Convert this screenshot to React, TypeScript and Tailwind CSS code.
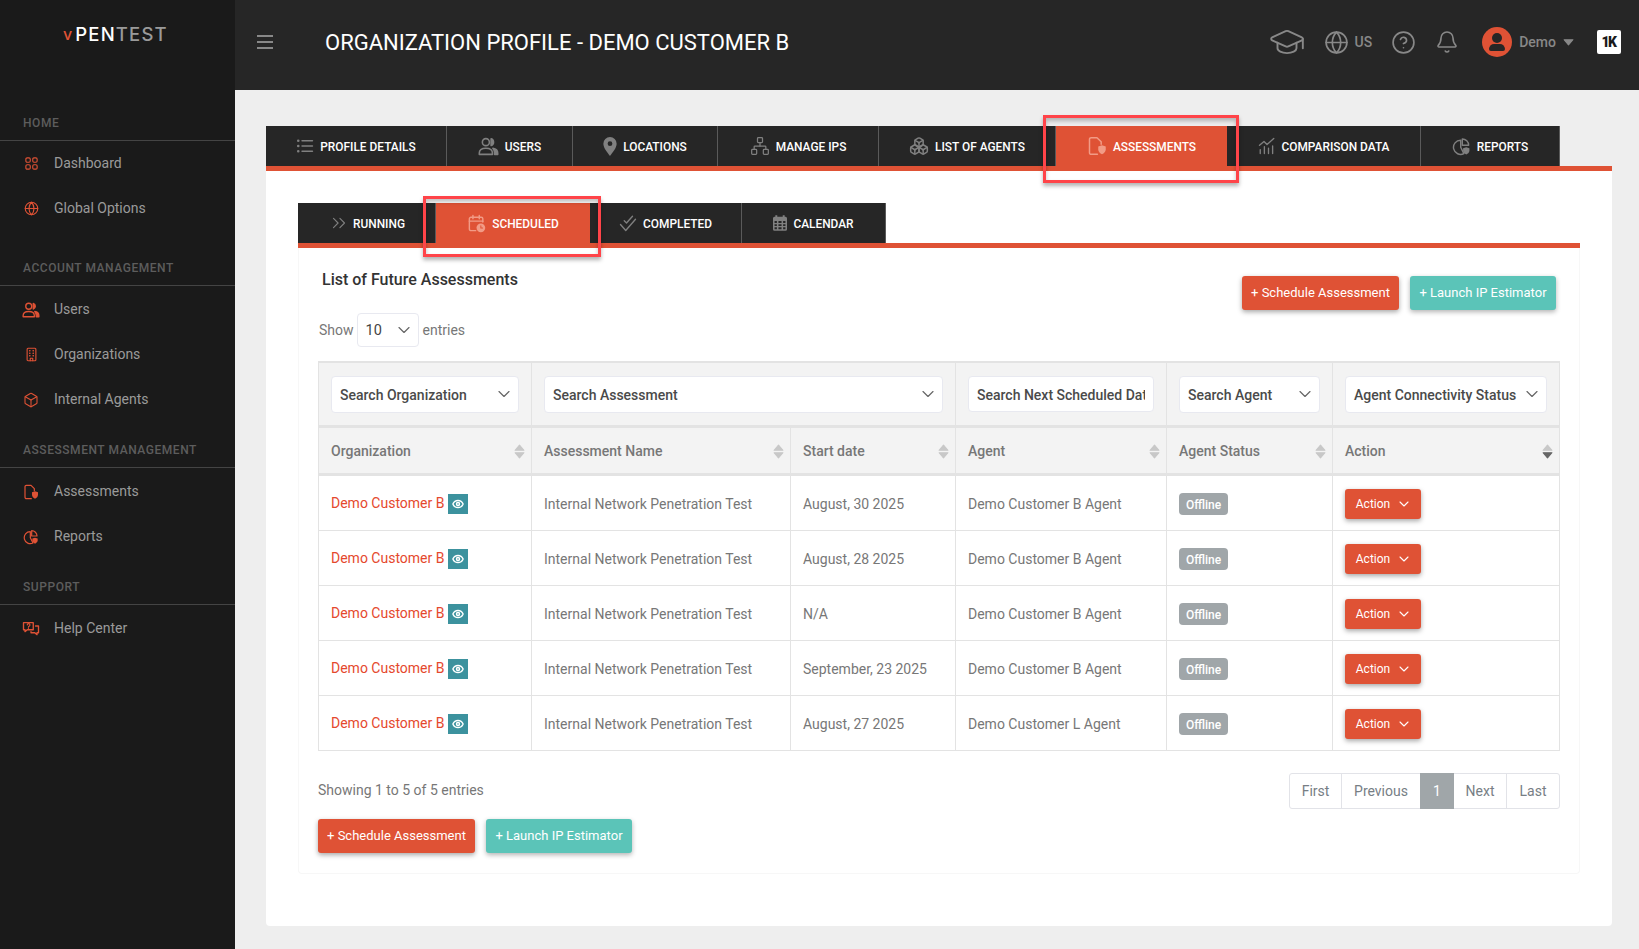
import React from "react";
import { Bell, Box, ChevronDown, ChevronsRight, CircleHelp, Eye, Globe, GraduationCap, Network, Boxes } from "lucide-react";

type IconProps = { className?: string };

const S = ({ className, children }: IconProps & { children: React.ReactNode }) => (
  <svg viewBox="0 0 24 24" fill="none" stroke="currentColor" strokeWidth="1.8" strokeLinecap="round" strokeLinejoin="round" className={className}>
    {children}
  </svg>
);

const GridIcon = ({ className }: IconProps) => (
  <S className={className}>
    <rect x="3" y="3" width="7" height="7" rx="2" />
    <rect x="14" y="3" width="7" height="7" rx="2" />
    <rect x="3" y="14" width="7" height="7" rx="2" />
    <rect x="14" y="14" width="7" height="7" rx="2" />
  </S>
);
const UsersIcon = ({ className }: IconProps) => (
  <S className={className}>
    <circle cx="9" cy="7" r="4" />
    <path d="M1.5 21v-1.500C1.5 16 4.500 14 9 14s7.500 2 7.500 5.500V21z" />
    <path d="M15 3.200a4 4 0 0 1 0 7.600z" fill="currentColor" />
    <path d="M17 14c3.500.5 5.500 2.500 5.500 5.500V21H19v-2c0-2-.8-3.500-2-5z" fill="currentColor" />
  </S>
);
const BuildingIcon = ({ className }: IconProps) => (
  <S className={className}>
    <rect x="5" y="2" width="14" height="20" rx="1.500" />
    <path d="M9 6h.5M14.500 6h.5M9 10h.5M14.500 10h.5M9 14h.5M14.500 14h.5" strokeWidth="2.200" />
    <path d="M10 22v-4h4v4" />
  </S>
);
const FileShieldIcon = ({ className }: IconProps) => (
  <S className={className}>
    <path d="M12.500 22H5a2 2 0 0 1-2-2V4a2 2 0 0 1 2-2h7l5 5v3" />
    <path d="M18 11l4.500 1.500v3.500c0 3-2 4.800-4.500 6-2.500-1.200-4.500-3-4.500-6v-3.500z" fill="currentColor" stroke="none" />
  </S>
);
const ReportsIcon = ({ className }: IconProps) => (
  <S className={className}>
    <path d="M11 4a9 9 0 1 0 4 17l-4-8z" />
    <path d="M13 2.500a8 8 0 0 1 8 8h-8z" />
    <path d="M18 13l4 1.300v2.700c0 2.500-1.800 4-4 5-2.200-1-4-2.500-4-5v-2.700z" fill="currentColor" stroke="none" />
  </S>
);
const HelpIcon = ({ className }: IconProps) => (
  <S className={className}>
    <path d="M2 3.500h13v9.500H7l-3 2.500V13H2z" />
    <path d="M18 8h4v9h-2v2.500L17 17h-5v-1.500" />
    <path d="M7 6.500a1.800 1.800 0 1 1 2.500 1.800c-.6.300-1 .7-1 1.200M8.500 11.200h0" strokeWidth="1.500" />
  </S>
);
const ListIcon = ({ className }: IconProps) => (
  <S className={className}>
    <path d="M8 5h14M8 12h14M8 19h14" />
    <path d="M3 5h.01M3 12h.01M3 19h.01" strokeWidth="3.500" />
  </S>
);
const PinIcon = ({ className }: IconProps) => (
  <svg viewBox="0 0 14 20" className={className} fill="currentColor">
    <path fillRule="evenodd" d="M7 0a7 7 0 0 1 7 7c0 4.500-4.500 9.500-7 13C4.500 16.500 0 11.500 0 7a7 7 0 0 1 7-7zm0 4.500a2.500 2.500 0 1 0 0 5 2.500 2.500 0 0 0 0-5z" />
  </svg>
);
const CompareIcon = ({ className }: IconProps) => (
  <S className={className}>
    <path d="M2 11l6-5 4 4 9-8" />
    <path d="M3 22v-5M8.500 22v-9M14 22v-7M19.500 22v-10" />
  </S>
);
const CalendarClockIcon = ({ className }: IconProps) => (
  <S className={className}>
    <path d="M11 21H5a2 2 0 0 1-2-2V6a2 2 0 0 1 2-2h13a2 2 0 0 1 2 2v4" />
    <path d="M3 9h17M7.500 2v4M15.500 2v4" />
    <circle cx="17.500" cy="17.500" r="5.500" fill="currentColor" stroke="none" />
    <path d="M17.500 15v2.800h2.200" stroke="#df5235" strokeWidth="1.300" />
  </S>
);
const DoubleCheckIcon = ({ className }: IconProps) => (
  <S className={className}>
    <path d="M2 14l7 8L22 7" />
    <path d="M7 9l3 3 8-9" />
  </S>
);
const CalendarGridIcon = ({ className }: IconProps) => (
  <svg viewBox="0 0 18 20" className={className} fill="currentColor">
    <path fillRule="evenodd" d="M3 0h2.500v2h7V0H15v2h1a2 2 0 0 1 2 2v14a2 2 0 0 1-2 2H2a2 2 0 0 1-2-2V4a2 2 0 0 1 2-2h1zM2 7.500V10h3V7.500zm5 0V10h4V7.500zm6 0V10h3V7.500zM2 11.500V14h3v-2.500zm5 0V14h4v-2.500zm6 0V14h3v-2.500zM2 15.500V18h3v-2.500zm5 0V18h4v-2.500zm6 0V18h3v-2.500z" />
  </svg>
);

const Triangle = ({ up, className }: { up?: boolean; className?: string }) => (
  <svg viewBox="0 0 10 6" className={className} fill="currentColor" stroke="currentColor" strokeWidth="1" strokeLinejoin="round">
    {up ? <path d="M1 5.500 5 .8 9 5.500z" /> : <path d="M1 .5 5 5.200 9 .5z" />}
  </svg>
);

const SortIcon = ({ active }: { active?: boolean }) => (
  <span className="flex flex-col gap-[1px] w-[11px] shrink-0">
    <Triangle up className="w-[11px] h-[7px] text-[#c8c8c8]" />
    <Triangle className={active ? "w-[11px] h-[7px] text-[#666666]" : "w-[11px] h-[7px] text-[#c8c8c8]"} />
  </span>
);

function SectionLabel({ children }: { children: React.ReactNode }) {
  return (
    <div className="h-[35px] pl-[23px] pb-[9px] flex items-end border-b border-[#444444] text-[12px] font-medium tracking-[0.55px] leading-[16px] text-[#5d5d5d]">
      {children}
    </div>
  );
}

function SideItem({ icon, label }: { icon: React.ReactNode; label: string }) {
  return (
    <div className="h-[45px] flex items-center text-[14px] text-[#9a9a9a]">
      <span className="w-[54px] flex justify-center pl-[14px] pr-[6px] text-[#df5235]">{icon}</span>
      {label}
    </div>
  );
}

const topTabs = [
  { w: "w-[181px]", label: "PROFILE DETAILS", icon: <ListIcon className="w-[18px] h-[18px]" /> },
  { w: "w-[126px]", label: "USERS", icon: <UsersIcon className="w-[21px] h-[21px]" /> },
  { w: "w-[145px]", label: "LOCATIONS", icon: <PinIcon className="w-[14px] h-[19px]" /> },
  { w: "w-[161px]", label: "MANAGE IPS", icon: <Network className="w-[20px] h-[20px]" strokeWidth={1.5} /> },
  { w: "w-[177px]", label: "LIST OF AGENTS", icon: <Boxes className="w-[20px] h-[20px]" strokeWidth={1.8} /> },
  { w: "w-[171px]", label: "ASSESSMENTS", icon: <FileShieldIcon className="w-[20px] h-[20px]" />, active: true },
  { w: "w-[194px]", label: "COMPARISON DATA", icon: <CompareIcon className="w-[18px] h-[18px]" /> },
  { w: "w-[139px]", label: "REPORTS", icon: <ReportsIcon className="w-[19px] h-[19px]" /> },
];

const subTabs = [
  { w: "w-[138px]", label: "RUNNING", icon: <ChevronsRight className="w-[22px] h-[22px] -mr-[3px]" strokeWidth={1.2} /> },
  { w: "w-[154px]", label: "SCHEDULED", icon: <CalendarClockIcon className="w-[19px] h-[19px]" />, active: true },
  { w: "w-[152px]", label: "COMPLETED", icon: <DoubleCheckIcon className="w-[18px] h-[18px]" /> },
  { w: "w-[144px]", label: "CALENDAR", icon: <CalendarGridIcon className="w-[14px] h-[16px]" /> },
];

function Tab({ w, label, icon, active }: { w: string; label: string; icon: React.ReactNode; active?: boolean }) {
  return active ? (
    <div className={`${w} h-[40px] shrink-0 flex items-center justify-center gap-[6px] bg-[#df5235] text-white text-[11.9px] font-medium`}>
      <span className="flex text-[#f29b86]">{icon}</span>
      <span className="pt-[3px]">{label}</span>
    </div>
  ) : (
    <div className={`${w} h-[40px] shrink-0 flex items-center justify-center gap-[6px] bg-[#262626] border-r border-[#5a5a5a] text-white text-[11.9px] font-medium`}>
      <span className="flex text-[#808080]">{icon}</span>
      <span className="pt-[3px]">{label}</span>
    </div>
  );
}

function PrimaryBtn({ children }: { children: React.ReactNode }) {
  return (
    <button className="h-[34px] w-[157px] rounded-[3px] bg-[#df5235] text-white text-[13px] shadow-[0_2px_5px_rgba(0,0,0,0.35)]">
      {children}
    </button>
  );
}
function TealBtn({ children }: { children: React.ReactNode }) {
  return (
    <button className="h-[34px] w-[146px] rounded-[3px] bg-[#5bc4b8] text-white text-[13px] shadow-[0_2px_5px_rgba(0,0,0,0.3)]">
      {children}
    </button>
  );
}

function FilterSelect({ label, w }: { label: string; w: string }) {
  return (
    <div className={`${w} h-[37px] rounded-[4px] bg-white border border-[#e8e9f0] pl-[8px] pr-[4px] flex items-center justify-between text-[14px] font-medium text-[#4a4a4a]`}>
      <span className="whitespace-nowrap pt-[3px]">{label}</span>
      <ChevronDown className="w-[20px] h-[20px] text-[#666666]" strokeWidth={1.4} />
    </div>
  );
}

const rows = [
  ["August, 30 2025", "Demo Customer B Agent"],
  ["August, 28 2025", "Demo Customer B Agent"],
  ["N/A", "Demo Customer B Agent"],
  ["September, 23 2025", "Demo Customer B Agent"],
  ["August, 27 2025", "Demo Customer L Agent"],
];

const headers = ["Organization", "Assessment Name", "Start date", "Agent", "Agent Status", "Action"];

export default function App() {
  return (
    <div className="flex h-screen overflow-hidden bg-[#eeeeee] font-['Roboto',sans-serif]">
      <aside className="w-[235px] shrink-0 bg-[#1a1a1a]">
        <div className="h-[106px] pl-[63px] pt-[22px]">
          <div className="flex items-end leading-[24px] text-[18.500px] font-['Inter',sans-serif] font-medium">
            <span className="text-[#df5235] mr-[3px] text-[16px]">v</span>
            <span className="text-white tracking-[1.2px]">PEN</span>
            <span className="text-[#9a9a9a] tracking-[1.2px]">TEST</span>
          </div>
        </div>
        <div className="mb-[20px]">
          <SectionLabel>HOME</SectionLabel>
          <SideItem icon={<GridIcon className="w-[15px] h-[15px]" />} label="Dashboard" />
          <SideItem icon={<Globe className="w-[15px] h-[15px]" strokeWidth={1.8} />} label="Global Options" />
        </div>
        <div className="mb-[12px]">
          <SectionLabel>ACCOUNT MANAGEMENT</SectionLabel>
          <div className="pt-[1px] -mb-[1px]">
            <SideItem icon={<UsersIcon className="w-[18px] h-[18px]" />} label="Users" />
            <SideItem icon={<BuildingIcon className="w-[15px] h-[15px]" />} label="Organizations" />
            <SideItem icon={<Box className="w-[16px] h-[16px]" strokeWidth={1.6} />} label="Internal Agents" />
          </div>
        </div>
        <div className="mb-[12px]">
          <SectionLabel>ASSESSMENT MANAGEMENT</SectionLabel>
          <div className="pt-[1px] -mb-[1px]">
            <SideItem icon={<FileShieldIcon className="w-[16px] h-[16px]" />} label="Assessments" />
            <SideItem icon={<ReportsIcon className="w-[16px] h-[16px]" />} label="Reports" />
          </div>
        </div>
        <div>
          <SectionLabel>SUPPORT</SectionLabel>
          <div className="pt-[1px]">
            <SideItem icon={<HelpIcon className="w-[18px] h-[18px]" />} label="Help Center" />
          </div>
        </div>
      </aside>

      <div className="flex-1 min-w-0 flex flex-col">
        <header className="h-[90px] shrink-0 bg-[#262626] flex items-center pl-[22px] pr-[18px] pb-[6px] text-[#888888]">
          <div className="w-[16px] flex flex-col gap-[4px] mr-[52px]">
            <span className="h-[2px] bg-[#888888]" />
            <span className="h-[2px] bg-[#888888]" />
            <span className="h-[2px] bg-[#888888]" />
          </div>
          <h1 className="text-[22px] text-white font-normal whitespace-nowrap">ORGANIZATION PROFILE - DEMO CUSTOMER B</h1>
          <div className="ml-auto flex items-center">
            <GraduationCap className="w-[38px] h-[38px] mr-[18px]" strokeWidth={1.2} />
            <Globe className="w-[25px] h-[25px] mr-[6px]" strokeWidth={1.6} />
            <span className="text-[14px] font-medium mr-[19px]">US</span>
            <CircleHelp className="w-[25px] h-[25px] mr-[19px]" strokeWidth={1.6} />
            <Bell className="w-[24px] h-[24px] mr-[23px]" strokeWidth={1.6} />
            <span className="w-[30px] h-[30px] rounded-full bg-[#df5235] mr-[7px] flex flex-col items-center justify-center gap-[1px] overflow-hidden">
              <span className="w-[10px] h-[10px] rounded-full bg-[#262626]" />
              <span className="w-[16px] h-[7px] rounded-t-[8px] rounded-b-[3px] bg-[#262626]" />
            </span>
            <span className="text-[14px] font-medium mr-[7px]">Demo</span>
            <Triangle className="w-[11px] h-[7px] mr-[23px]" />
            <span className="w-[24px] h-[24px] rounded-[2px] bg-white flex items-center justify-center text-[#1a1a1a] text-[14px] font-black tracking-[-1.5px] pr-[1px]">
              1K
            </span>
          </div>
        </header>

        <main className="flex-1 min-h-0 pl-[31px] pr-[27px] pt-[36px]">
          <div className="relative flex">
            {topTabs.map((t) => (
              <Tab key={t.label} {...t} />
            ))}
            <div className="absolute left-[777px] top-[-11px] w-[196px] h-[68px] border-[3px] border-[#ff4449] shadow-[0_3px_4px_rgba(0,0,0,0.3),inset_0_3px_4px_rgba(0,0,0,0.25)]" />
          </div>
          <div className="h-[5px] bg-[#df5235]" />
          <div className="bg-white rounded-b-[4px] pt-[32px] px-[32px] pb-[52px]">
            <div className="relative flex">
              {subTabs.map((t) => (
                <Tab key={t.label} {...t} />
              ))}
              <div className="absolute left-[125px] top-[-7px] w-[178px] h-[61px] border-[3px] border-[#ff4449] shadow-[0_3px_4px_rgba(0,0,0,0.3),inset_0_3px_4px_rgba(0,0,0,0.25)]" />
            </div>
            <div className="h-[5px] bg-[#df5235]" />
            <section className="border-x border-b border-[#f7f7f7] rounded-b-[4px] px-[19px] pt-[20px] pb-[20px]">
              <div className="flex justify-between items-start">
                <h2 className="pl-[4px] text-[16px] leading-[24px] font-medium text-[#333333]">List of Future Assessments</h2>
                <div className="flex gap-[11px] pr-[4px] pt-[8px]">
                  <PrimaryBtn>+ Schedule Assessment</PrimaryBtn>
                  <TealBtn>+ Launch IP Estimator</TealBtn>
                </div>
              </div>
              <div className="mt-[3px] h-[34px] flex items-center text-[14px] text-[#777777]">
                <span className="pl-[1px]">Show</span>
                <div className="ml-[3px] mr-[4px] w-[62px] h-[34px] rounded-[4px] border border-[#e8e9f0] pl-[8px] pr-[4px] flex items-center justify-between text-[#444444] text-[14.500px]">
                  <span className="pt-[2px]">10</span>
                  <ChevronDown className="w-[20px] h-[20px] text-[#666666]" strokeWidth={1.4} />
                </div>
                <span>entries</span>
              </div>

              <table className="mt-[14px] w-[1242px] table-fixed border-separate border-spacing-0 text-[14px]">
                <colgroup>
                  <col className="w-[214px]" />
                  <col className="w-[259px]" />
                  <col className="w-[165px]" />
                  <col className="w-[211px]" />
                  <col className="w-[166px]" />
                  <col className="w-[227px]" />
                </colgroup>
                <thead>
                  <tr className="bg-[#f3f3f3]">
                    <th className="h-[67px] border-t-2 border-b-[3px] border-l border-r border-[#e3e3e3] pl-[12px] pr-[12px] font-normal">
                      <FilterSelect label="Search Organization" w="w-[188px]" />
                    </th>
                    <th colSpan={2} className="border-t-2 border-b-[3px] border-r border-[#e3e3e3] pl-[12px] pr-[12px] font-normal">
                      <FilterSelect label="Search Assessment" w="w-[399px]" />
                    </th>
                    <th className="border-t-2 border-b-[3px] border-r border-[#e3e3e3] pl-[12px] pr-[12px] font-normal">
                      <input
                        readOnly
                        placeholder="Search Next Scheduled Date"
                        className="w-[186px] h-[36px] rounded-[4px] bg-white border border-[#e8e9f0] px-[8px] pt-[2px] text-[14px] font-medium placeholder:text-[#4a4a4a] outline-none"
                      />
                    </th>
                    <th className="border-t-2 border-b-[3px] border-r border-[#e3e3e3] pl-[12px] pr-[12px] font-normal">
                      <FilterSelect label="Search Agent" w="w-[141px]" />
                    </th>
                    <th className="border-t-2 border-b-[3px] border-r border-[#e3e3e3] pl-[12px] font-normal">
                      <FilterSelect label="Agent Connectivity Status" w="w-[202px]" />
                    </th>
                  </tr>
                  <tr className="bg-[#f3f3f3]">
                    {headers.map((h, i) => (
                      <th
                        key={h}
                        className={
                          i === 0
                            ? "h-[48px] pt-[2px] border-b-[3px] border-l border-r border-[#e3e3e3] pl-[12px] pr-[6px] font-medium text-[#777777] text-left"
                            : "h-[48px] pt-[2px] border-b-[3px] border-r border-[#e3e3e3] pl-[12px] pr-[6px] font-medium text-[#777777] text-left"
                        }
                      >
                        <div className="flex items-center justify-between">
                          {h}
                          <SortIcon active={h === "Action"} />
                        </div>
                      </th>
                    ))}
                  </tr>
                </thead>
                <tbody className="text-[#777777]">
                  {rows.map(([date, agent], i) => (
                    <tr key={i}>
                      <td className="h-[55px] pt-[2px] border-b border-l border-r border-[#e3e3e3] pl-[12px]">
                        <div className="flex items-center gap-[4px] text-[#e5482d]">
                          <span className="relative top-[-1px]">Demo Customer B</span>
                          <span className="w-[20px] h-[20px] bg-[#3c929e] flex items-center justify-center">
                            <Eye className="w-[12px] h-[12px] text-white" strokeWidth={3} />
                          </span>
                        </div>
                      </td>
                      <td className="pt-[2px] border-b border-r border-[#e3e3e3] pl-[12px] whitespace-nowrap">Internal Network Penetration Test</td>
                      <td className="pt-[2px] border-b border-r border-[#e3e3e3] pl-[12px] whitespace-nowrap">{date}</td>
                      <td className="pt-[2px] border-b border-r border-[#e3e3e3] pl-[12px] whitespace-nowrap">{agent}</td>
                      <td className="pt-[2px] border-b border-r border-[#e3e3e3] pl-[12px]">
                        <span className="inline-flex items-center justify-center w-[49px] h-[22px] pt-[1px] rounded-[4px] bg-[#a0a6a9] text-white text-[12px] font-medium">
                          Offline
                        </span>
                      </td>
                      <td className="pt-[1px] border-b border-r border-[#e3e3e3] pl-[12px]">
                        <button className="w-[76px] h-[30px] pl-[2px] rounded-[3px] bg-[#df5235] text-white text-[12px] flex items-center justify-center gap-[6px] shadow-[0_2px_5px_rgba(0,0,0,0.35)]">
                          Action
                          <ChevronDown className="w-[16px] h-[16px]" strokeWidth={1.6} />
                        </button>
                      </td>
                    </tr>
                  ))}
                </tbody>
              </table>

              <div className="mt-[22px] h-[36px] flex items-center justify-between text-[14px] text-[#777777]">
                <span className="pb-[2px]">Showing 1 to 5 of 5 entries</span>
                <div className="flex h-[36px] rounded-[3px] border border-[#e2e3e8] text-[#777e85]">
                  <span className="w-[52px] flex items-center justify-center border-r border-[#e2e3e8]">First</span>
                  <span className="w-[78px] flex items-center justify-center">Previous</span>
                  <span className="w-[34px] -my-[1px] flex items-center justify-center bg-[#a0a6a9] text-white">1</span>
                  <span className="w-[53px] flex items-center justify-center border-r border-[#e2e3e8]">Next</span>
                  <span className="w-[52px] flex items-center justify-center">Last</span>
                </div>
              </div>
              <div className="mt-[10px] flex gap-[11px]">
                <PrimaryBtn>+ Schedule Assessment</PrimaryBtn>
                <TealBtn>+ Launch IP Estimator</TealBtn>
              </div>
            </section>
          </div>
        </main>
      </div>
    </div>
  );
}
